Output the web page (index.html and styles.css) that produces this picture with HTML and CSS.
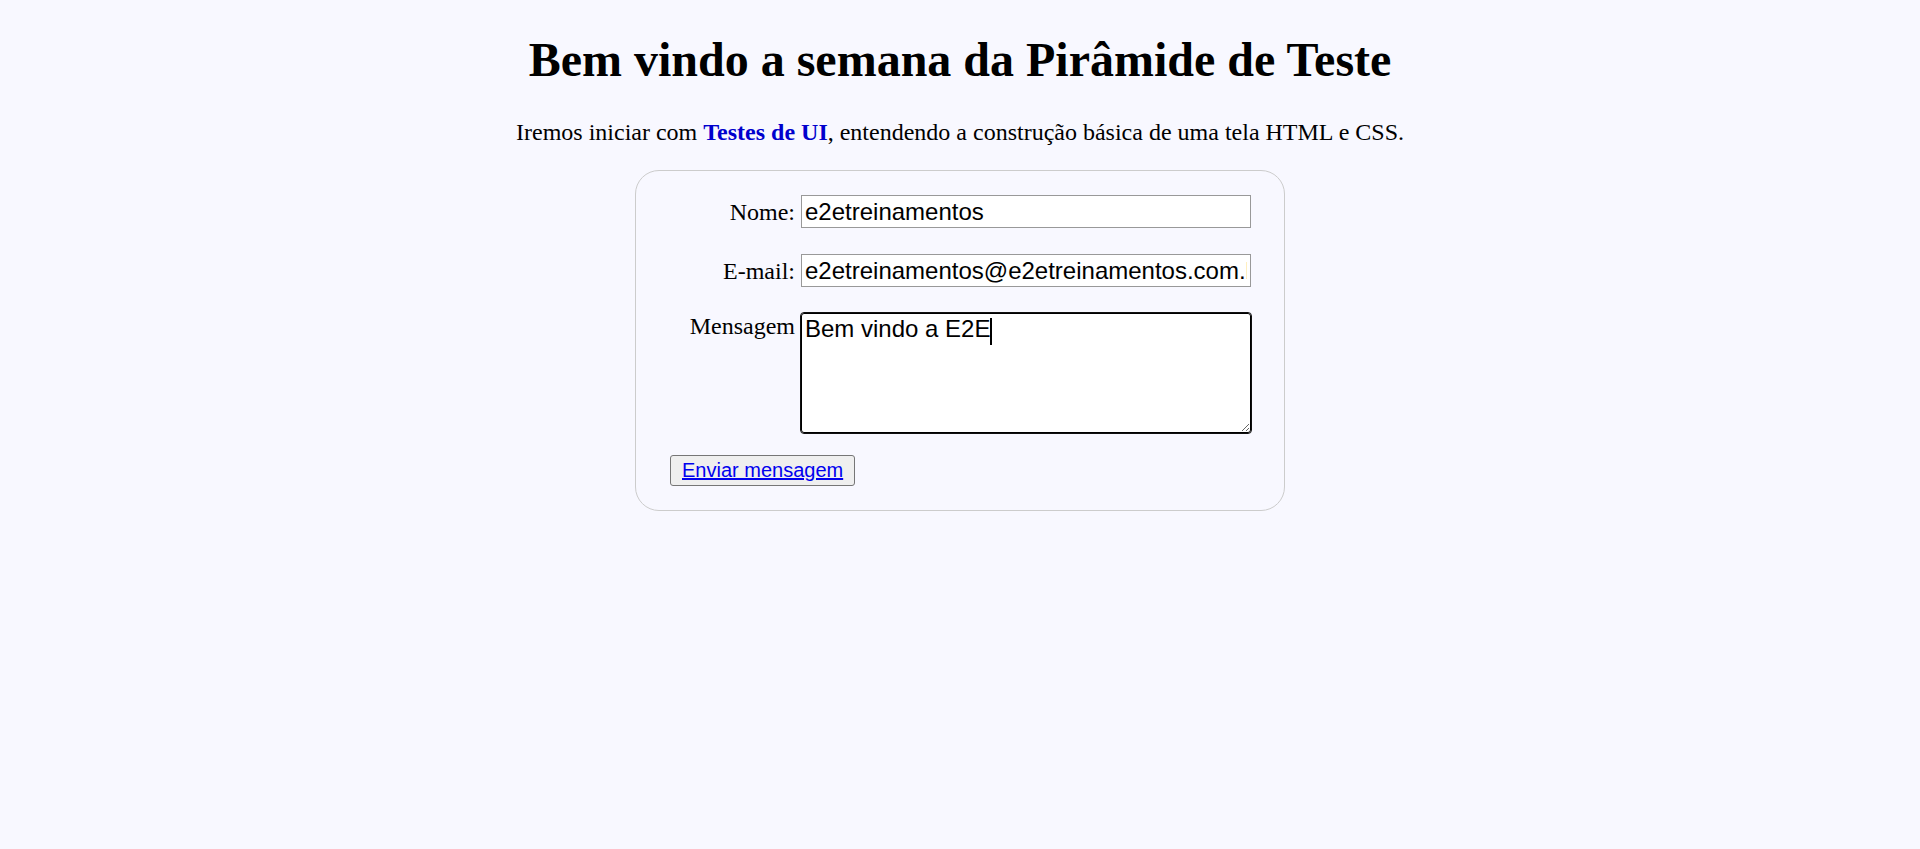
FILE: index.html
```html
<!DOCTYPE html>
<html lang="pt-BR">
<head>
<meta charset="utf-8">
<title>Pirâmide de Teste</title>
<link rel="stylesheet" href="styles.css">
</head>
<body>
<h1 class="title">Bem vindo a semana da Pirâmide de Teste</h1>
<p class="intro">Iremos iniciar com <strong class="hl">Testes de UI</strong>, entendendo a construção básica de uma tela HTML e CSS.</p>
<form class="form">
  <ul class="fields">
    <li class="row">
      <label class="lbl" for="name">Nome:</label>
      <input class="field" type="text" id="name" value="e2etreinamentos">
    </li>
    <li class="row">
      <label class="lbl" for="mail">E-mail:</label>
      <input class="field" type="text" id="mail" value="e2etreinamentos@e2etreinamentos.com.br">
    </li>
    <li class="row row-area">
      <label class="lbl" for="msg">Mensagem</label>
      <span class="ta-wrap"><textarea class="field area focused" id="msg">Bem vindo a E2E</textarea><span class="caret"></span></span>
    </li>
    <li class="row row-btn">
      <button class="btn" type="button"><a class="btn-link" href="#">Enviar mensagem</a></button>
    </li>
  </ul>
</form>
</body>
</html>
```
FILE: styles.css
```css
html {
  background: #f8f8ff;
}
body {
  margin: 0 12px 12px;
  padding-top: 1px;
  font-family: "Liberation Serif", "Times New Roman", serif;
  font-size: 24px;
  color: #000;
  background: #f8f8ff;
}
.title {
  font-size: 48px;
  font-weight: bold;
  text-align: center;
  margin: 31px 0 32px;
}
.intro {
  text-align: center;
  margin: 24px 0;
}
.hl {
  color: #0000cd;
}
.form {
  margin: 0 auto;
  width: 600px;
  padding: 24px;
  border: 1.5px solid #ccc;
  border-radius: 24px;
}
.fields {
  list-style: none;
  padding: 0;
  margin: 0;
}
.row + .row {
  margin-top: 26px;
}
.row-area {
  margin-top: 25px;
}
.row + .row-btn {
  margin-top: 22px;
}
.lbl {
  display: inline-block;
  width: 135px;
  text-align: right;
}
.field {
  font: 24px "Liberation Sans", Arial, sans-serif;
  width: 450px;
  box-sizing: border-box;
  border: 1.5px solid #999;
  padding: 1.5px 3px;
  margin: 0;
  background: #fff;
  color: #000;
}
.ta-wrap {
  display: inline-block;
  position: relative;
  vertical-align: top;
}
.area {
  display: block;
  height: 120px;
  resize: both;
  padding: 1px 3px 3px;
}
.focused {
  border: 1.5px solid #000;
  outline: 1.5px solid #101010;
  outline-offset: 0;
  border-radius: 3px;
}
.caret {
  position: absolute;
  left: 189px;
  top: 5px;
  width: 1.5px;
  height: 27px;
  background: #000;
}
.btn {
  margin-left: 10px;
  font: 20px "Liberation Sans", Arial, sans-serif;
  padding: 3px 11px;
  background: #efefef;
  border: 1.5px solid #767676;
  border-radius: 3px;
  color: #000;
}
.btn-link {
  color: #0000ee;
  text-decoration: underline;
}
```
